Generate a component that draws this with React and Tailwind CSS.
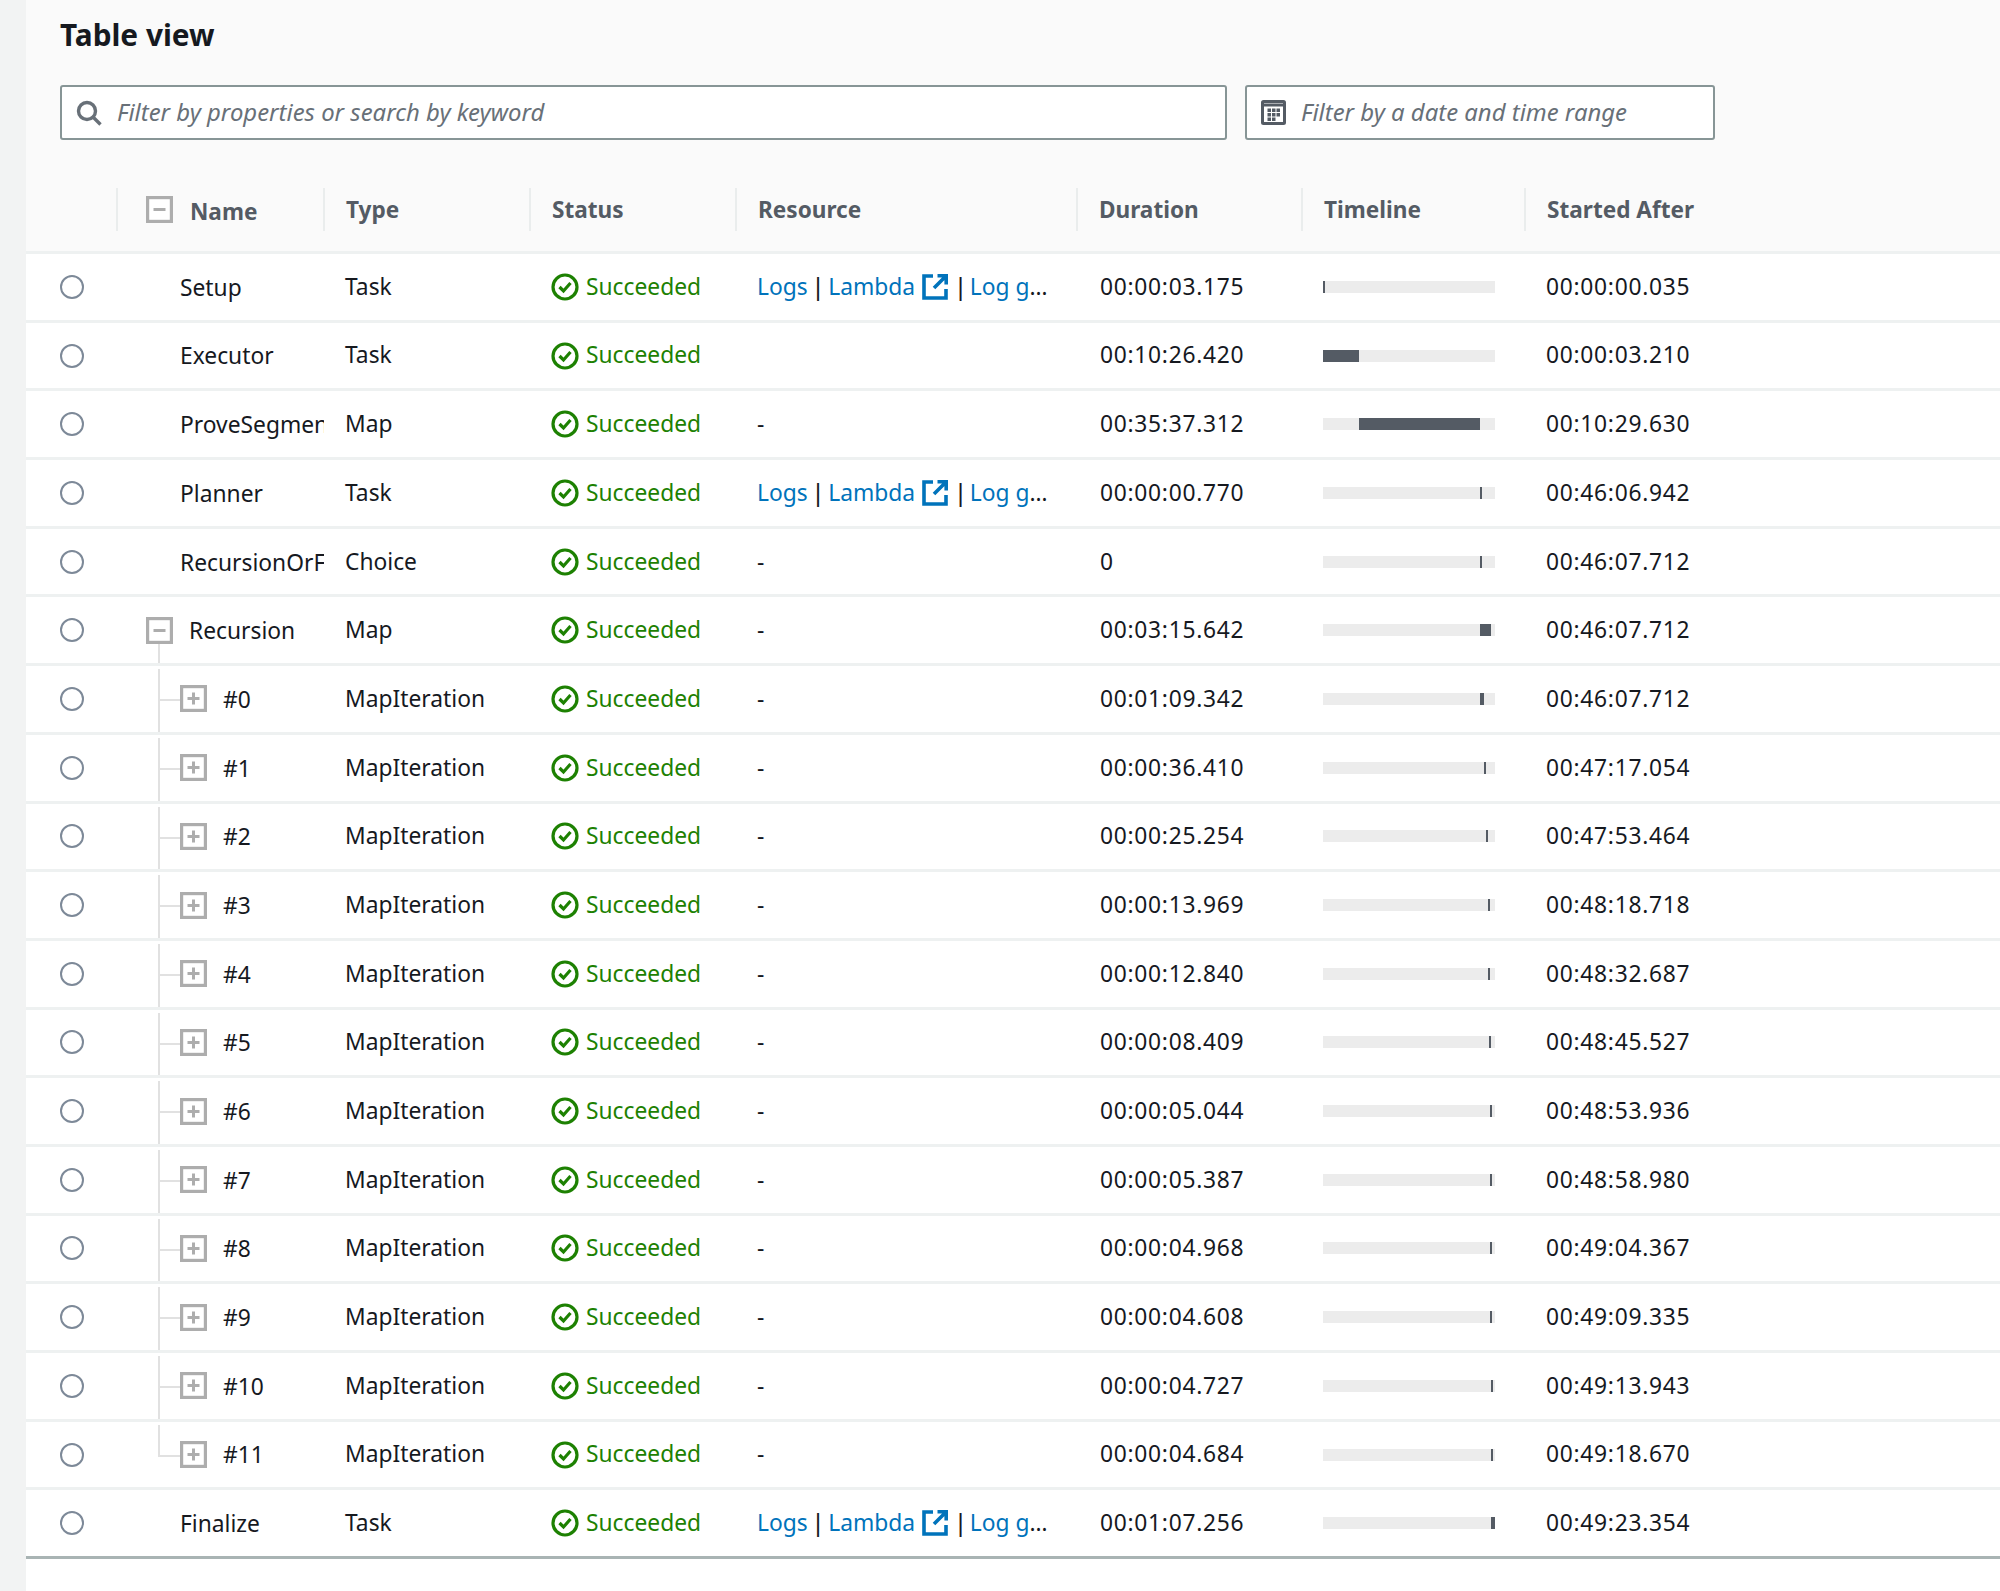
import React from "react";

const rows = [
  { name: "Setup", type: "Task", res: "links", dur: "00:00:03.175", start: "00:00:00.035" },
  { name: "Executor", type: "Task", res: "", dur: "00:10:26.420", start: "00:00:03.210" },
  { name: "ProveSegments", type: "Map", res: "-", dur: "00:35:37.312", start: "00:10:29.630" },
  { name: "Planner", type: "Task", res: "links", dur: "00:00:00.770", start: "00:46:06.942" },
  { name: "RecursionOrFinalize", type: "Choice", res: "-", dur: "0", start: "00:46:07.712" },
  { name: "Recursion", type: "Map", res: "-", dur: "00:03:15.642", start: "00:46:07.712", kind: "parent" },
  { name: "#0", type: "MapIteration", res: "-", dur: "00:01:09.342", start: "00:46:07.712", kind: "child" },
  { name: "#1", type: "MapIteration", res: "-", dur: "00:00:36.410", start: "00:47:17.054", kind: "child" },
  { name: "#2", type: "MapIteration", res: "-", dur: "00:00:25.254", start: "00:47:53.464", kind: "child" },
  { name: "#3", type: "MapIteration", res: "-", dur: "00:00:13.969", start: "00:48:18.718", kind: "child" },
  { name: "#4", type: "MapIteration", res: "-", dur: "00:00:12.840", start: "00:48:32.687", kind: "child" },
  { name: "#5", type: "MapIteration", res: "-", dur: "00:00:08.409", start: "00:48:45.527", kind: "child" },
  { name: "#6", type: "MapIteration", res: "-", dur: "00:00:05.044", start: "00:48:53.936", kind: "child" },
  { name: "#7", type: "MapIteration", res: "-", dur: "00:00:05.387", start: "00:48:58.980", kind: "child" },
  { name: "#8", type: "MapIteration", res: "-", dur: "00:00:04.968", start: "00:49:04.367", kind: "child" },
  { name: "#9", type: "MapIteration", res: "-", dur: "00:00:04.608", start: "00:49:09.335", kind: "child" },
  { name: "#10", type: "MapIteration", res: "-", dur: "00:00:04.727", start: "00:49:13.943", kind: "child" },
  { name: "#11", type: "MapIteration", res: "-", dur: "00:00:04.684", start: "00:49:18.670", kind: "last" },
  { name: "Finalize", type: "Task", res: "links", dur: "00:01:07.256", start: "00:49:23.354" },
];

const GRID = "grid grid-cols-[91px_207px_206px_206px_341px_225px_223px_1fr]";
const TOTAL = 3030.61;

const toSeconds = (t) => {
  if (t === "0") return 0;
  const [h, m, s] = t.split(":");
  return Number(h) * 3600 + Number(m) * 60 + Number(s);
};

const TreeBox = ({ open }) => (
  <svg viewBox="0 0 27 27" className="w-[27px] h-[27px] shrink-0 relative z-[1]">
    <rect x="1.5" y="1.5" width="24" height="24" fill="#fff" stroke="#adadad" strokeWidth="3.4" />
    <path d={open ? "M7.5 13.5h12" : "M7.5 13.5h12M13.5 7.5v12"} stroke="#adadad" strokeWidth="3" fill="none" />
  </svg>
);

const StatusIcon = () => (
  <svg viewBox="0 0 28 28" className="w-[28px] h-[28px] shrink-0" fill="none" stroke="#1d8102" strokeWidth="3.2">
    <circle cx="14" cy="14" r="12" />
    <path d="M8.5 14l4 4 7-8" />
  </svg>
);

const ExternalIcon = () => (
  <svg viewBox="0 0 26 26" className="inline-block w-[26px] h-[26px] align-[-5px] ml-[7px] mr-[6px]" fill="none" stroke="#0073bb" strokeWidth="3.6">
    <path d="M11 2H2v22h22V15" />
    <path d="M12 14L24 2M15.5 1.8h8.7v8.7" />
  </svg>
);

const SearchIcon = () => (
  <svg viewBox="0 0 26 26" className="w-[26px] h-[26px] shrink-0" fill="none" stroke="#687078" strokeWidth="3.4">
    <circle cx="11" cy="11" r="8.5" />
    <path d="M17 17l7.5 7.5" />
  </svg>
);

const CalendarIcon = () => (
  <svg viewBox="0 0 25 25" className="w-[25px] h-[25px] shrink-0">
    <rect x="1.5" y="1.5" width="22" height="22" rx="1" fill="#fff" stroke="#545b64" strokeWidth="3" />
    <path d="M1 5h23" stroke="#545b64" strokeWidth="3" />
    <path d="M6.5 8.5h3.5v3.5H6.5zM11 8.5h3.5v3.5H11zM15.5 8.5h3.5v3.5h-3.5zM6.5 13h3.5v3.5H6.5zM11 13h3.5v3.5H11zM15.5 13h3.5v3.5h-3.5zM6.5 17.5h3.5V21H6.5zM11 17.5h3.5V21H11z" fill="#545b64" />
  </svg>
);

const Header = ({ children }) => (
  <div className="-ml-[1px] border-l-2 border-[#eaeded] pl-[21px] h-[43px] flex items-center text-[#545b64] font-bold text-[22.6px]">
    {children}
  </div>
);

const Resource = ({ value }) => {
  if (value === "links") {
    return (
      <div className="truncate w-[297px] leading-[30px]">
        <a className="text-[#0073bb]">Logs</a>
        <span className="mx-[4px] font-medium">|</span>
        <a className="text-[#0073bb]">Lambda</a>
        <ExternalIcon />
        <span className="mr-[3px] font-medium">|</span>
        <a className="text-[#0073bb]">Log group of the state</a>
      </div>
    );
  }
  return <div>{value}</div>;
};

const NameCell = ({ row }) => {
  if (row.kind === "parent") {
    return (
      <div className="relative h-full flex items-center pl-[29px] gap-[16px]">
        <TreeBox open />
        <span className="pt-[2px]">{row.name}</span>
        <div className="absolute left-[41px] top-[47px] bottom-0 w-[2px] bg-[#e1e1e1]" />
      </div>
    );
  }
  if (row.kind === "child" || row.kind === "last") {
    return (
      <div className="relative h-full flex items-center pl-[63px] gap-[16px]">
        <TreeBox />
        <span className="pt-[2px]">{row.name}</span>
        <div className={`absolute left-[41px] top-[3px] w-[2px] bg-[#e1e1e1] ${row.kind === "last" ? "h-[32px]" : "bottom-0"}`} />
        <div className="absolute left-[41px] top-[33px] w-[22px] h-[2px] bg-[#e1e1e1]" />
      </div>
    );
  }
  return (
    <div className="h-full flex items-center pl-[63px] overflow-hidden whitespace-nowrap">
      <span className="pt-[2px]">{row.name}</span>
    </div>
  );
};

const Timeline = ({ row }) => {
  const left = (toSeconds(row.start) / TOTAL) * 172;
  const width = Math.max((toSeconds(row.dur) / TOTAL) * 172, 2);
  return (
    <div className="relative w-[172px] h-[12px] bg-[#ececec]">
      <div className="absolute top-0 bottom-0 bg-[#545b64]" style={{ left: `${left}px`, width: `${width}px` }} />
    </div>
  );
};

const Row = ({ row }) => (
  <div className={`${GRID} h-[68.7px] items-center border-b-[3px] border-[#eef1f1] last:border-[#a9b4b4] bg-white`}>
    <div className="pl-[34px] flex items-center">
      <div className="w-[24px] h-[24px] rounded-full border-2 border-[#7d8998] bg-white" />
    </div>
    <NameCell row={row} />
    <div className="pl-[21px]">{row.type}</div>
    <div className="pl-[21px] flex items-center gap-[7px] text-[#1d8102]">
      <StatusIcon />
      <span>Succeeded</span>
    </div>
    <div className="pl-[21px]">
      <Resource value={row.res} />
    </div>
    <div className="pl-[23px] tracking-[0.72px]">{row.dur}</div>
    <div className="pl-[21px]">
      <Timeline row={row} />
    </div>
    <div className="pl-[21px] tracking-[0.72px]">{row.start}</div>
  </div>
);

export default function App() {
  return (
    <div className="flex min-h-[1591px] bg-[#f2f3f3] text-[#16191f] text-[22.8px] font-['Noto_Sans',sans-serif]">
      <div className="w-[26px] shrink-0" />
      <div className="flex-1 bg-white">
        <div className="bg-[#fafafa] border-b-[3px] border-[#eef1f1]">
          <div className="pl-[34px] pt-[15px] h-[85px] text-[29.8px] font-bold leading-[40px]">Table view</div>
          <div className="pl-[34px] flex gap-[18px] text-[#687078] italic text-[23.9px]">
            <div className="w-[1167px] h-[55px] flex items-center gap-[15px] pl-[14px] bg-white border-2 border-[#879596] rounded-[3px]">
              <SearchIcon />
              <span className="pb-[2px]">Filter by properties or search by keyword</span>
            </div>
            <div className="w-[470px] h-[55px] flex items-center gap-[15px] pl-[14px] bg-white border-2 border-[#879596] rounded-[3px]">
              <CalendarIcon />
              <span className="pb-[2px]">Filter by a date and time range</span>
            </div>
          </div>
          <div className={`${GRID} mt-[48px] pb-[20px]`}>
            <div />
            <Header>
              <div className="flex items-center pl-[7px] gap-[17px]">
                <TreeBox open />
                <span className="pt-[4px]">Name</span>
              </div>
            </Header>
            <Header>Type</Header>
            <Header>Status</Header>
            <Header>Resource</Header>
            <Header>Duration</Header>
            <Header>Timeline</Header>
            <Header>Started After</Header>
          </div>
        </div>
        {rows.map((row) => (
          <Row key={row.name} row={row} />
        ))}
      </div>
    </div>
  );
}
